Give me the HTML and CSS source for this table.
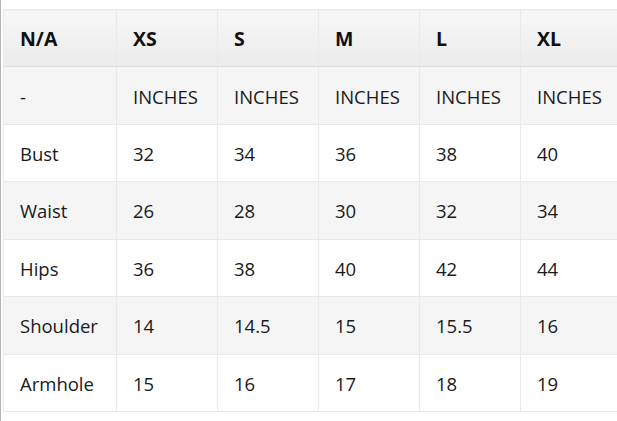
FILE: index.html
```html
<!DOCTYPE html>
<html>
<head>
<meta charset="utf-8">
<link rel="stylesheet" href="styles.css">
</head>
<body>
<div class="frame">
  <table class="size-table">
    <colgroup>
      <col class="c-first">
      <col class="c">
      <col class="c">
      <col class="c">
      <col class="c">
      <col class="c">
    </colgroup>
    <thead>
      <tr><th>N/A</th><th>XS</th><th>S</th><th>M</th><th>L</th><th>XL</th></tr>
    </thead>
    <tbody>
      <tr class="alt"><td>-</td><td>INCHES</td><td>INCHES</td><td>INCHES</td><td>INCHES</td><td>INCHES</td></tr>
      <tr><td>Bust</td><td>32</td><td>34</td><td>36</td><td>38</td><td>40</td></tr>
      <tr class="alt"><td>Waist</td><td>26</td><td>28</td><td>30</td><td>32</td><td>34</td></tr>
      <tr><td>Hips</td><td>36</td><td>38</td><td>40</td><td>42</td><td>44</td></tr>
      <tr class="alt"><td>Shoulder</td><td>14</td><td>14.5</td><td>15</td><td>15.5</td><td>16</td></tr>
      <tr><td>Armhole</td><td>15</td><td>16</td><td>17</td><td>18</td><td>19</td></tr>
    </tbody>
  </table>
</div>
</body>
</html>
```

FILE: styles.css
```css
html, body {
  margin: 0;
  padding: 0;
  background: #ffffff;
  overflow: hidden;
}
.frame {
  width: 617px;
  height: 421px;
  box-sizing: border-box;
  border-left: 1px solid #b4b4b4;
  padding: 9px 0 0 2px;
  overflow: hidden;
}
.size-table {
  border-collapse: collapse;
  table-layout: fixed;
  width: 619px;
  font-family: "Open Sans", "Noto Sans", sans-serif;
  font-size: 18.5px;
  color: #1a1a1a;
}
.c-first { width: 113px; }
.c { width: 101px; }
.size-table tr {
  height: 57.43px;
}
.size-table th,
.size-table td {
  border: 1px solid #e9e9e9;
  padding: 2px 0 0 16px;
  text-align: left;
  vertical-align: middle;
  white-space: nowrap;
  line-height: 24px;
}
.size-table th {
  font-weight: 700;
  font-size: 19.5px;
  color: #111;
  background: linear-gradient(#f7f7f7, #ebebeb);
  border-bottom: 1px solid #dedede;
}
.size-table tr.alt td {
  background: #f5f5f5;
}
```
